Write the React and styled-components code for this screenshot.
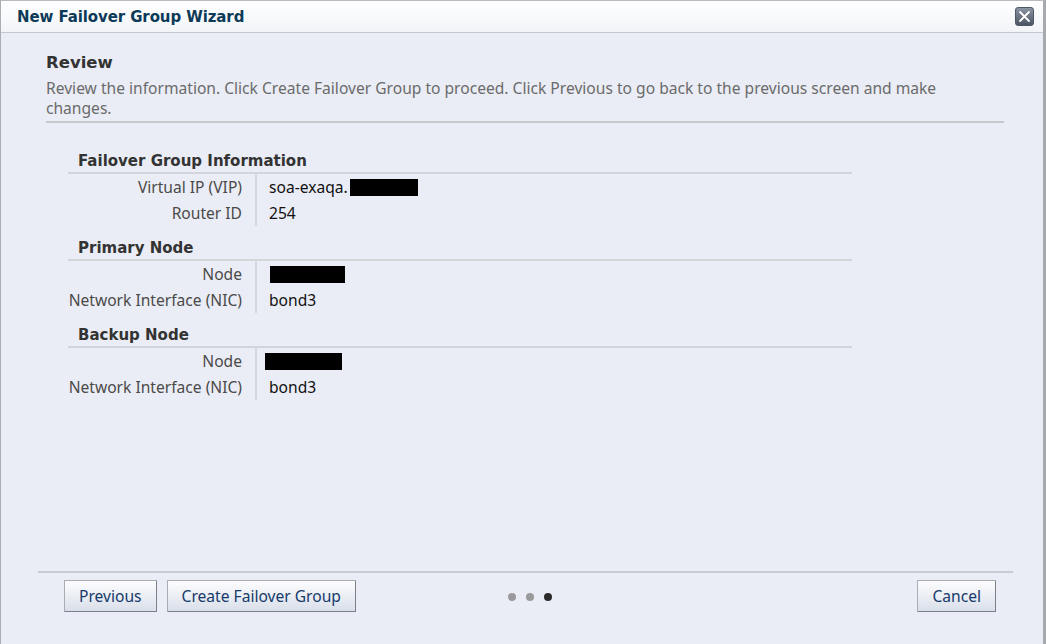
import React from 'react';
import styled, { createGlobalStyle } from 'styled-components';

const GlobalStyle = createGlobalStyle`
  html, body {
    margin: 0;
    padding: 0;
    height: 100%;
    background: #e9ecf4;
  }
  #root {
    height: 100%;
  }
`;

const Dialog = styled.div`
  box-sizing: border-box;
  height: 644px;
  width: 1046px;
  display: flex;
  flex-direction: column;
  background: #eaedf5;
  border-left: 1px solid #a9adb4;
  border-top: 1px solid #b8bcc2;
  border-right: 3px solid #a6a9ae;
  font-family: "Noto Sans", "DejaVu Sans", sans-serif;
`;

const TitleBar = styled.div`
  height: 32px;
  flex: none;
  display: flex;
  align-items: center;
  justify-content: space-between;
  padding: 1px 9px 0 16px;
  box-sizing: border-box;
  background: linear-gradient(#ffffff, #f2f4f8);
  border-bottom: 1px solid #c3c7ce;
`;

const Title = styled.h1`
  margin: 0;
  font-family: "DejaVu Sans", sans-serif;
  font-size: 15px;
  font-weight: bold;
  color: #0d3a57;
  letter-spacing: -0.1px;
`;

const CloseButton = styled.button`
  width: 19px;
  height: 19px;
  padding: 0;
  margin-top: -1px;
  border: 1px solid #4e5866;
  border-radius: 3px;
  background: linear-gradient(#8a94a2, #4c5563);
  display: flex;
  align-items: center;
  justify-content: center;
  cursor: pointer;
`;

const Body = styled.div`
  flex: 1;
  padding: 19px 39px 0 45px;
  display: flex;
  flex-direction: column;
`;

const StepTitle = styled.h2`
  margin: 0;
  font-family: "DejaVu Sans", sans-serif;
  font-size: 16.5px;
  font-weight: bold;
  color: #333333;
  line-height: 22px;
`;

const StepHint = styled.p`
  margin: 4px 0 0;
  font-size: 15.6px;
  line-height: 20px;
  color: #6b6b6b;
  padding: 0 50px 3px 0;
  border-bottom: 2px solid #c6c8cc;
`;

const Sections = styled.div`
  margin: 25px 0 0 22px;
  width: 784px;
`;

const SectionHeader = styled.h3`
  margin: 0;
  padding: 3px 0 1px 10px;
  font-family: "DejaVu Sans", sans-serif;
  font-size: 15px;
  font-weight: bold;
  color: #333333;
  line-height: 20px;
  border-bottom: 2px solid #d3d5d9;
`;

const Rows = styled.div`
  display: grid;
  grid-template-columns: 189px 1fr;
  margin-bottom: 9px;
`;

const Label = styled.div`
  text-align: right;
  padding-right: 13px;
  font-size: 15.6px;
  line-height: 26px;
  color: #4a4a4a;
  border-right: 2px solid #d6d8dc;
  white-space: nowrap;
`;

const Value = styled.div`
  padding-left: 12px;
  font-size: 15.6px;
  line-height: 26px;
  color: #111111;
  display: flex;
  align-items: center;
`;

const Redact = styled.span`
  display: inline-block;
  width: ${p => p.w}px;
  height: 17px;
  margin-left: ${p => p.ml || 0}px;
  background: #000;
`;

const Footer = styled.div`
  margin: 0 30px 0 37px;
  padding: 7px 17px 32px 26px;
  border-top: 2px solid #c9ccd1;
  display: grid;
  grid-template-columns: 1fr auto 1fr;
  align-items: center;
`;

const ButtonGroup = styled.div`
  display: flex;
  gap: 10px;
  justify-content: ${p => (p.end ? 'flex-end' : 'flex-start')};
`;

const Button = styled.button`
  height: 32px;
  padding: 0 14px;
  font-family: "Noto Sans", "DejaVu Sans", sans-serif;
  font-size: 15.6px;
  color: #163a6a;
  background: linear-gradient(#fdfdfe, #d9dfea);
  border: 1px solid #a9adb3;
  border-right-color: #7d8187;
  border-bottom-color: #7d8187;
  border-radius: 1px;
  cursor: pointer;
`;

const Dots = styled.div`
  display: flex;
  gap: 10px;
  padding-top: 1px;
`;

const Dot = styled.span`
  width: 8px;
  height: 8px;
  border-radius: 50%;
  background: ${p => (p.active ? '#2b2b2b' : '#9a9a9a')};
`;

const sections = [
  {
    title: 'Failover Group Information',
    rows: [
      { label: 'Virtual IP (VIP)', value: <>soa-exaqa.<Redact w={68} ml={2} /></> },
      { label: 'Router ID', value: '254' },
    ],
  },
  {
    title: 'Primary Node',
    rows: [
      { label: 'Node', value: <Redact w={75} ml={1} /> },
      { label: 'Network Interface (NIC)', value: 'bond3' },
    ],
  },
  {
    title: 'Backup Node',
    rows: [
      { label: 'Node', value: <Redact w={77} ml={-4} /> },
      { label: 'Network Interface (NIC)', value: 'bond3' },
    ],
  },
];

export default function App() {
  return (
    <>
      <GlobalStyle />
      <Dialog>
        <TitleBar>
          <Title>New Failover Group Wizard</Title>
          <CloseButton aria-label="Close">
            <svg width="13" height="13" viewBox="0 0 13 13">
              <path d="M2 2 L11 11 M11 2 L2 11" stroke="#ffffff" strokeWidth="1.8" strokeLinecap="round" />
            </svg>
          </CloseButton>
        </TitleBar>
        <Body>
          <StepTitle>Review</StepTitle>
          <StepHint>
            Review the information. Click Create Failover Group to proceed. Click Previous to go back to the previous screen and make changes.
          </StepHint>
          <Sections>
            {sections.map(s => (
              <React.Fragment key={s.title}>
                <SectionHeader>{s.title}</SectionHeader>
                <Rows>
                  {s.rows.map(r => (
                    <React.Fragment key={r.label}>
                      <Label>{r.label}</Label>
                      <Value>{r.value}</Value>
                    </React.Fragment>
                  ))}
                </Rows>
              </React.Fragment>
            ))}
          </Sections>
        </Body>
        <Footer>
          <ButtonGroup>
            <Button>Previous</Button>
            <Button>Create Failover Group</Button>
          </ButtonGroup>
          <Dots>
            <Dot />
            <Dot />
            <Dot active />
          </Dots>
          <ButtonGroup end>
            <Button>Cancel</Button>
          </ButtonGroup>
        </Footer>
      </Dialog>
    </>
  );
}
